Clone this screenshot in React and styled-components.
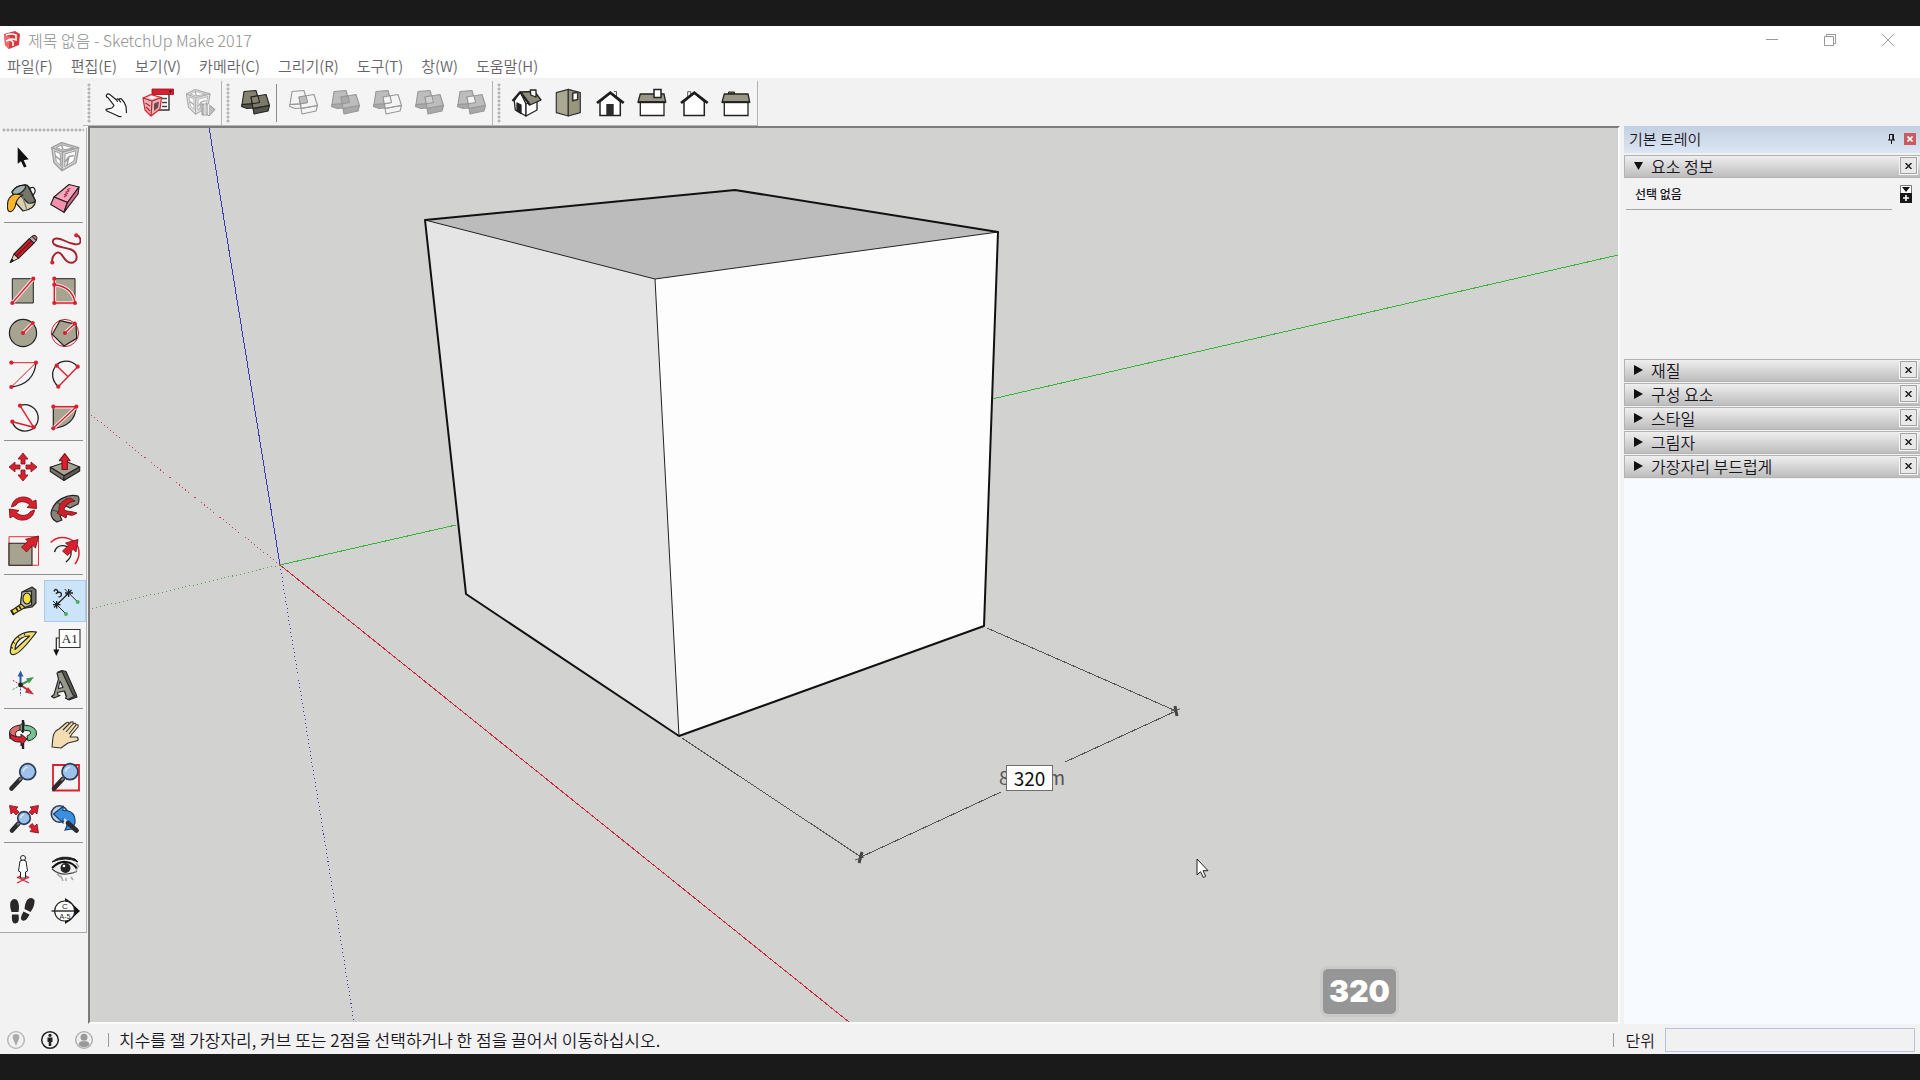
import React, { useState } from "react";
import styled, { createGlobalStyle, css } from "styled-components";

const RED = "#d9202e";
const STONE = "#a6a491";
const INK = "#222222";

const GlobalStyle = createGlobalStyle`
  *, *::before, *::after { box-sizing: border-box; }
  body {
    margin: 0;
    background: #1a1a1a;
    color: #1a161e;
    font-family: "Noto Sans CJK KR", "Liberation Sans", sans-serif;
    font-size: 16px;
    font-weight: 350;
  }
  button {
    margin: 0;
    padding: 0;
    border: 0;
    background: none;
    color: inherit;
    font: inherit;
  }
`;

/* ---------- icons, all on a 32 x 32 grid ---------- */

const Dot = ({ at }) => <circle cx={at[0]} cy={at[1]} r="2.1" fill={RED} />;

// red construction line with a light casing so it reads on the stone fill
const Guide = ({ d }) => (
  <>
    <path d={d} stroke="#f6e4e4" strokeWidth="3.6" fill="none" />
    <path d={d} stroke={RED} strokeWidth="1.4" fill="none" />
  </>
);

const Crate = ({ line, fill }) => (
  <g stroke={line} fill={fill} strokeLinejoin="round">
    <path d="M2.7 6.7 12.7 1.7 29.7 6.7 27 21.7 13 29.7 5 21.7Z" strokeWidth="1.3" />
    <path d="M2.7 6.7 13.5 11 29.7 6.7M13.5 11 13 29.7" strokeWidth="1.3" />
    <path d="M5.6 10 11.3 12.5 11.3 24.5 7.3 20.5Z M16 13 27 9.7 24.8 20.3 15.8 25.5Z" fill="#fff" />
    <path d="M7 6.7 13 3.8 25 7 13.6 9Z" fill="#fff" />
    <path d="M6.5 15 11.3 19M16 21 20 15.5 24.8 14.5M18 24 20 15.5M12.5 4 14 8.5" strokeWidth="1.5" fill="none" />
  </g>
);

const Solids = ({ back = "#bdbdbd", front = "#bdbdbd", lap = "#bdbdbd", line = "#979797", side = "#a9a9a9" }) => (
  <g stroke={line} strokeWidth="1.1" strokeLinejoin="round">
    <path d="M5 4.5 17 3.5 20.5 15.5 13.5 17 3 17.5Z" fill={back} />
    <path d="M3 17.5 13.5 16.7 14 21 8 21.5 2.5 19.5Z" fill={back === "none" ? "none" : side} />
    <path d="M12 10 27 7.5 30.5 18.5 14 21.5Z" fill={front} />
    <path d="M14 21.5 30.5 18.5 29 24 15 27Z" fill={front === "none" ? "none" : side} />
    <path d="M12 10 19 8.8 20.5 15.5 13.3 16.8Z" fill={lap} />
  </g>
);

const Lens = ({ x, y, r, hx, hy }) => (
  <>
    <path d={`M${x - r * 0.9} ${y + r * 0.9} ${hx} ${hy}`} stroke="#2b2b30" strokeWidth="4.6" strokeLinecap="round" />
    <path d={`M${x - r * 0.7} ${y + r * 0.7} ${x - r * 1.1} ${y + r * 1.1}`} stroke="#777" strokeWidth="2" />
    <circle cx={x} cy={y} r={r} fill="#9dc1ea" stroke="#2e3b55" strokeWidth="1.7" />
    <path d={`M${x - r * 0.55} ${y} A${r * 0.6} ${r * 0.6} 0 0 1 ${x} ${y - r * 0.55}`} stroke="#d7e8fb" strokeWidth="1.5" fill="none" />
  </>
);

const ICONS = {
  interact: (
    <path
      d="M12 21 6 22.3C6 24 8.5 25 10.5 25.5L17 28.5Q19 30 21.5 29.5M26.5 26 26 19.5Q24.5 15 21.5 12Q20 10.8 19 13Q17.5 10.8 16.5 13L9.5 7.2Q7.5 6 6.3 8.5Q6 10 8 10.7L14 18.3 12 21M16.5 13 17.8 15M19 13 20.8 15.4"
      fill="#fff" stroke={INK} strokeWidth="1.2" strokeLinejoin="round"
    />
  ),
  attributes: (
    <>
      <path d="M12 4H27V23H14" fill="#fff" stroke="#333" strokeWidth="1.4" />
      <path d="M10 2H31.5V7.5H10Z" fill={RED} stroke="#8c121c" strokeWidth=".8" />
      <path d="M26.5 3.8 30 3.8 28.3 6Z" fill="#4c0b10" />
      <path d="M20 11.5H25M20 15.5H25M20 19.5H25" stroke="#444" strokeWidth="1.3" />
      <path d="M1 11 9 7.5 19.5 10.5 18 22 9 29 3 23Z" fill="#efb3b7" stroke={RED} strokeWidth="1.2" strokeLinejoin="round" />
      <path d="M1 11 10 14 19.5 10.5M10 14 9 29M3.5 16 8 19M4 20 8 24" stroke="#a92b35" strokeWidth="1.2" />
      <path d="M6 10.5 10 8.7 15 10.5 10 12Z" fill="#fff" />
      <path d="M12 16.5 17 14.5 16 20.5 12 24Z" fill="#6d4a4b" />
    </>
  ),
  dynamic: (
    <>
      <g transform="translate(0 1) scale(.88)"><Crate line="#adadad" fill="#e6e6e6" /></g>
      <path d="M18 17H24L31 22.5 25 29 24 28H18Z" fill="#bdbdbd" stroke="#999" />
      <path d="M21 17V28M24.5 17V28" stroke="#eee" />
    </>
  ),
  shell: <Solids back="#85836f" front="#7b796a" lap="#85836f" line="#222" side="#55544a" />,
  intersect: <Solids back="none" front="none" lap="#bcbcbc" />,
  union: <Solids lap="#aaa" />,
  subtract: <Solids front="none" lap="#f4f4f4" />,
  trim: <Solids lap="#d0d0d0" />,
  split: <Solids lap="#f4f4f4" />,
  houseIso: (
    <g stroke={INK} strokeWidth="1.3" strokeLinejoin="round">
      <path d="M4.3 13.7 10.3 5 16 17V29L5.3 23Z" fill="#fff" />
      <path d="M16 17 27 13V23L16 29Z" fill="#fff" />
      <path d="M7 16 11 18V26.5L7 24Z" fill={INK} />
      <path d="M10.3 5 24.5 4.5 31 13 20 18Z" fill="#8e8c79" />
      <path d="M10.3 5 2.5 14M10.3 5 20 18" strokeWidth="2.2" />
      <path d="M20.3 3H26V10L20.8 8Z" fill="#fff" />
    </g>
  ),
  houseTop: (
    <g stroke="#333" strokeWidth="1.2" strokeLinejoin="round">
      <path d="M4.3 5.7 16.3 2.3V29L4.3 25.7Z" fill="#aaa893" />
      <path d="M16.3 2.3 28.3 5.7V25.7L16.3 29Z" fill="#98967f" />
      <path d="M20.7 6.3 25.7 5.3V12.5L20.7 13.7Z" fill="#fff" strokeWidth="1.6" />
    </g>
  ),
  houseFront: (
    <>
      <path d="M20 4.5H22.5V9" stroke="#555" fill="none" />
      <path d="M6 14.7 16.3 6 26.3 14.7V28.5H6Z" fill="#fff" stroke={INK} strokeWidth="1.5" />
      <path d="M3 16 16.3 5.7 29.7 16" stroke="#1d1d1d" strokeWidth="2.8" fill="none" />
      <path d="M12.3 17H19.7V28.5H12.3Z" fill="#2b2b2b" />
    </>
  ),
  houseRight: (
    <g stroke={INK} strokeWidth="1.3">
      <path d="M4.3 15H28V28.5H4.3Z" fill="#fff" />
      <path d="M4.3 7H28L29.7 15H2Z" fill="#999783" />
      <path d="M2 15.2H29.7" strokeWidth="2" />
      <path d="M18 2.5H25V10.5H18Z" fill="#fff" strokeWidth="1.5" />
    </g>
  ),
  houseBack: (
    <>
      <path d="M9.7 10V4.7H12.7V8" stroke="#555" fill="#fff" />
      <path d="M6 14.7 16.3 6 26.3 14.7V28.5H6Z" fill="#fff" stroke={INK} strokeWidth="1.5" />
      <path d="M3 16 16.3 5.7 29.7 16" stroke="#1d1d1d" strokeWidth="2.8" fill="none" />
    </>
  ),
  houseLeft: (
    <g stroke={INK} strokeWidth="1.3">
      <path d="M8.5 5H14.5V7H8.5Z" fill="#777" strokeWidth="1" />
      <path d="M4.3 15H28V28.5H4.3Z" fill="#fff" />
      <path d="M4.3 7H28L29.7 15H2Z" fill="#999783" />
      <path d="M2 15.2H29.7" strokeWidth="2" />
    </g>
  ),

  select: <path d="M10.7 6.3V22.7L14 20.3 17 26.6 19.6 25.4 16.7 19.2 21.7 18.3Z" fill="#111" />,
  component: <Crate line="#9c9c9c" fill="#d4d4d4" />,
  paint: (
    <g stroke={INK} strokeWidth="1.2" strokeLinejoin="round">
      <path d="M5 9Q9 2 18 2L22 4 28.5 18Q28 26 16 28L9 20Z" fill="#d8d0ae" />
      <path d="M17 2Q21 1 22 5L28.5 18Q26 21 21 20L11 10Z" fill="#77766a" />
      <path d="M5 9Q9 2 18 2.2Q20 4 16 8T7 12Z" fill="#9eb3b3" />
      <path d="M22 6C27 1 31 8 25 13" fill="none" />
      <path d="M15 12 20 27" fill="none" stroke="#777" />
      <path d="M8 11C2 13 0 19 .5 25Q1 30 5 28Q8 26 9 20Q11 14 16 12Z" fill="#fbb72c" />
    </g>
  ),
  eraser: (
    <g stroke={INK} strokeWidth="1.2" strokeLinejoin="round">
      <path d="M20 1.5 30 4 18.5 19.5 5 14Z" fill="#f9a6bd" />
      <path d="M5 14 18.5 19.5 15 29.3 1.7 21.5Z" fill="#f68fad" />
      <path d="M30 4 29 11 15 29.3 18.5 19.5Z" fill="#d96b8b" />
      <path d="M15 14 17.5 12.5 15.5 11.5 18.5 10.5 17 9 20 8 18.5 6.5 21.5 5.5" fill="none" stroke="#9f2f55" strokeWidth="1.2" />
    </g>
  ),
  pencil: (
    <g stroke={INK} strokeLinejoin="round">
      <path d="M3.3 29.5 7 21 11.5 25.3Z" fill="#efd9ad" strokeWidth="1" />
      <path d="M7 21 22.5 5.5 27 10 11.5 25.3Z" fill="#c81f2a" strokeWidth="1.1" />
      <path d="M9.5 23 24.5 8" stroke="#75111a" strokeWidth="1.2" />
      <path d="M22.5 5.5 25 3.3 29.3 7.5 27 10Z" fill="#aaa" />
      <path d="M25 3.3Q27 1.4 29 3T29.3 7.5Z" fill="#e36477" />
      <path d="M3 29.8 5 26 6.6 27.6Z" fill="#111" />
    </g>
  ),
  freehand: (
    <>
      <path
        d="M3.3 29.5C2 23 8 17 12 21C15 24 17 31 24 29.5C30 27 28 19 22 16.5C15 14 5 14 4 9.5C3 4 10 5 15 7.5C22 11 32 14 31.5 7.5C31.3 4 29 2.5 27.3 2"
        fill="none" stroke="#a5222d" strokeWidth="1.9"
      />
      <Dot at={[3.3, 29.5]} /><Dot at={[27.3, 2.3]} />
    </>
  ),
  rectangle: (
    <>
      <path d="M5.3 3.7H26.3V28H5.3Z" fill={STONE} stroke={INK} />
      <Guide d="M5.3 28 26.3 3.7" />
      <Dot at={[5.3, 28]} /><Dot at={[26.3, 3.7]} />
    </>
  ),
  rotatedRect: (
    <>
      <path d="M5.3 3.7H26V28H5.3Z" fill={STONE} stroke={INK} />
      <Guide d="M5.3 4V28H26Q24 12 5.3 9.7" />
      <Dot at={[5.3, 3.7]} /><Dot at={[5.3, 9.7]} /><Dot at={[5.3, 28]} /><Dot at={[26, 28]} />
    </>
  ),
  circle: (
    <>
      <circle cx="16" cy="16" r="13.6" fill={STONE} stroke={INK} strokeWidth="1.2" />
      <Guide d="M16 16 25.7 6" />
      <Dot at={[16, 16]} /><Dot at={[25.7, 6]} />
    </>
  ),
  polygon: (
    <>
      <circle cx="16" cy="16" r="13.6" fill="#f4e9ea" stroke={RED} />
      <path d="M11 3.7 27 7.3 27.7 21.3 15 29 3.3 17.3Z" fill={STONE} stroke={INK} strokeWidth="1.2" />
      <Guide d="M16 16 25.7 6.7" />
      <Dot at={[16, 16]} /><Dot at={[25.7, 6.7]} />
    </>
  ),
  arc: (
    <>
      <path d="M29 3.7Q27 25 4.3 28" fill="none" stroke={INK} strokeWidth="1.3" />
      <path d="M4.3 3.7H29L4.3 28" fill="none" stroke={RED} />
      <Dot at={[4.3, 3.7]} /><Dot at={[29, 3.7]} /><Dot at={[4.3, 28]} />
    </>
  ),
  arc2: (
    <>
      <path d="M28.7 7.7C22 0 11 .5 6 8C2 14 3 22 9.3 27.7" fill="none" stroke={INK} strokeWidth="1.3" />
      <path d="M28.7 7.7 9.3 27.7M7.7 6.7 19 17.7" stroke={RED} strokeWidth="1.4" />
      <Dot at={[7.7, 6.7]} /><Dot at={[28.7, 7.7]} /><Dot at={[9.3, 27.7]} />
    </>
  ),
  arc3: (
    <>
      <path d="M13 4.7A13.2 13.2 0 1 1 5.3 20.7" fill="none" stroke={INK} strokeWidth="1.3" />
      <path d="M13 4.7 26.7 26.3 5.3 20.7" fill="none" stroke={RED} strokeWidth="1.4" />
      <Dot at={[13, 4.7]} /><Dot at={[5.3, 20.7]} /><Dot at={[26.7, 26.3]} />
    </>
  ),
  pie: (
    <>
      <path d="M4.3 5.7H27.3Q26 25 4.3 27.3Z" fill={STONE} stroke={INK} strokeWidth="1.2" />
      <Guide d="M4.3 5.7H27.3L4.3 27.3" />
      <Dot at={[4.3, 5.7]} /><Dot at={[27.3, 5.7]} /><Dot at={[4.3, 27.3]} />
    </>
  ),
  move: (
    <g fill={RED} stroke="#7c1119" strokeWidth=".8" strokeLinejoin="round">
      {[0, 90, 180, 270].map((r) => (
        <path key={r} transform={`rotate(${r} 16 16)`} d="M16 2 21 8H18V13H14V8H11Z" />
      ))}
    </g>
  ),
  pushPull: (
    <g stroke={INK} strokeWidth="1.1" strokeLinejoin="round">
      <path d="M1.3 16.3 17.7 10.7 30.7 16 15 24.7Z" fill="#a5a394" />
      <path d="M1.3 16.3 15 24.7V29.5L1.3 20.5Z" fill="#77766a" />
      <path d="M15 24.7 30.7 16V20L15 29.5Z" fill="#5c5b51" />
      <path d="M15.7 2.7 21 9.7H18.3V18.5H13V9.7H10.3Z" fill={RED} stroke="#7c1119" />
    </g>
  ),
  rotate: (
    <g fill={RED} stroke="#7c1119" strokeWidth=".9" strokeLinejoin="round">
      <path d="M4.5 14C6 3 20 1 26 8.5L29 7 29.5 15.5 20 14.5 22.8 12C18 7 11 8 8.5 12.5Z" />
      <path d="M27.5 17C26 28 12 30 6 23L3 25 2.3 16 12 17.5 9.3 19.7C14 24 21 23 23.5 18.5Z" />
    </g>
  ),
  followMe: (
    <g stroke={INK} strokeWidth="1.2" strokeLinejoin="round">
      <path d="M29 3C18 0 4 8 2 20Q2 26 8 29L13 27C9 22 12 16 17 13L21 15 29 11Q31 6 29 3Z" fill="#85837a" />
      <path d="M17 4 19 12M8 9 14 14M3 17 11 19" fill="none" stroke="#444" />
      <path d="M21 5C13 7 9 12 10 18L8 20 17 25 18 21Q23 24 28 20L24 19Q17 18 15 17C16 12 20 9 26 8Z" fill="#c9222d" stroke="#7c1119" strokeWidth=".9" />
    </g>
  ),
  scale: (
    <>
      <path d="M2 1.7H31.5V30.3H2Z" fill="#fbf1f1" stroke={RED} strokeWidth=".9" />
      <path d="M2 8.3H25V30.3H2Z" fill={STONE} stroke={INK} strokeWidth="1.1" />
      <path d="M31.7 1 28.5 13 25.5 10.3 19.5 17 14.5 12 21 6.3 18.5 4.3Z" fill={RED} stroke="#6d1017" strokeWidth=".8" />
    </>
  ),
  offset: (
    <>
      <path d="M1.7 7.5C10-1 24 2 29 12Q32 21 26 29" fill="none" stroke={RED} strokeWidth="1.5" />
      <path d="M5.5 17C8 8 20 9 22 17Q23 22 17 27" fill="none" stroke={INK} strokeWidth="1.4" />
      <path d="M29 4.5 27 17 24 14.3 18.5 20.5 13.5 16 19.3 10.5 16.5 8Z" fill={RED} stroke="#6d1017" strokeWidth=".8" />
    </>
  ),
  tape: (
    <g stroke={INK} strokeWidth="1.1" strokeLinejoin="round">
      <path d="M15 7 25 2 29 5V18L25 22 13 24Z" fill="#71726c" />
      <path d="M15 7 24.5 6V20L13 24Z" fill="#bdbcb2" />
      <ellipse cx="20" cy="13.5" rx="4" ry="5.5" fill="#f7e23c" />
      <path d="M14 19 18 22.5 6 29.5 4 26Z" fill="#f2dc35" />
      <path d="M4 25 7 30M9 23 11 26M12 21 14 24" fill="none" strokeWidth="1.6" />
    </g>
  ),
  dimension: (
    <g stroke={INK} strokeWidth="1.2" fill="none">
      <path d="M7.7 19.7 19.7 8" />
      <path d="M4 16 17 29M15.7 4 28.7 17" strokeWidth="1" />
      <path d="M7.7 16V23.5M4 19.7H11.5M19.7 4V12M16 8H24M5 22.5 10.5 17M17 10.5 22.5 5" strokeWidth="1.3" />
      <path d="M5 6.5Q6 3.5 8 5Q10 7 6.8 8.7Q11 6 12.3 8.5Q13 12 9.5 12" strokeWidth="1.4" />
      <circle cx="17" cy="29" r="2" fill="#4fae5b" stroke="none" />
      <circle cx="28.7" cy="17" r="2" fill="#4fae5b" stroke="none" />
    </g>
  ),
  protractor: (
    <g stroke={INK} strokeWidth="1.2" strokeLinejoin="round">
      <path d="M29.5 5C17 3 4 10 3.3 24Q3 28 7 27.5Q13 27 29.5 5Z" fill="#efdc6c" />
      <path d="M22.5 9C15 9 8.5 14 8 22.5Z" fill="#f5f4f5" />
      <path d="M6 15 8 16.5M11 9.5 12.5 11.5M17 6.5 18 8.5M3.8 20.5 6 21" fill="none" strokeWidth="1" />
    </g>
  ),
  text: (
    <>
      <path d="M10.3 2.5H31V20.5H10.3Z" fill="#fff" stroke="#333" strokeWidth="1.1" />
      <text x="20.7" y="16" fontFamily="Liberation Serif, serif" fontSize="13" textAnchor="middle" fill={INK}>A1</text>
      <path d="M10 11H7.3V23" fill="none" stroke={INK} strokeWidth="1.2" />
      <path d="M4.3 22.5H10.3L7.3 29Z" fill="#111" />
    </>
  ),
  axes: (
    <>
      <path d="M13.5 16V6" stroke="#2a5ba8" strokeWidth="2" />
      <path d="M10.5 7.5 13.5 1.5 16.5 7.5Z" fill="#2a5ba8" />
      <path d="M13.5 16 22 11.5" stroke="#3f9a50" strokeWidth="2" />
      <path d="M19 9.5 27 8 22 14.5Z" fill="#3f9a50" />
      <path d="M13.5 16 21 21" stroke="#c6303b" strokeWidth="2" />
      <path d="M21 18 27 25.5 18 23.5Z" fill="#c6303b" />
      <path d="M13.5 16V27" stroke="#2a5ba8" strokeDasharray="2 1.5" />
      <path d="M13.5 16 5 21" stroke="#3f9a50" strokeDasharray="2 1.5" />
      <path d="M13.5 16 4.5 10.5" stroke="#c6303b" strokeDasharray="2 1.5" />
      <circle cx="13.5" cy="16" r="2.4" fill={INK} />
    </>
  ),
  text3d: (
    <g stroke={INK} strokeWidth="1.1" strokeLinejoin="round">
      <path d="M9 3 13 1.5 17 2.5 27 25 28 28 20 31 18 29 10 8Z" fill="#5a5952" />
      <path d="M8 4 13 2.5 24 26 26 27 19 30.5 16.5 29 17.5 27.5 15.5 22 8.5 23.5 9 26 11 26.5 5 29 2.5 27.5 5 25.5 9.5 10Z" fill="#97968b" />
      <path d="M11 12 14 18.5 9.3 19.5Z" fill="#f5f4f5" />
    </g>
  ),
  orbit: (
    <g stroke={INK} strokeWidth="1" strokeLinejoin="round">
      <path d="M17 6Q30 7 29.5 15Q29 20 21 22L20 17Q25 15 23 12L16 11V14L11 8 17 3Z" fill="#74c496" />
      <path d="M13 6Q2 8 2.5 14L3 20 9 17Q7 12 13 11Z" fill="#e0676c" />
      <path d="M2.5 14Q3 24 14 23V27L20 20 14 15V18Q6 18 2.5 14Z" fill={RED} />
      <path d="M16 1V13M16 24V30" strokeWidth="2.4" />
    </g>
  ),
  pan: (
    <path
      d="M3 28 4 18Q5 12 10 10L17 4Q20 2 20 5L22 3Q25 2 24 5Q27 3 27 6Q30 5 29 8L23 15 21 18 28 18Q31 21 27 22L19 24 12 29ZM20 5 14 11M24 5 17 13M27 6 20 15"
      fill="#f4ddb2" stroke="#333" strokeWidth="1.1" strokeLinejoin="round"
    />
  ),
  zoom: <Lens x={20.7} y={10.7} r={8} hx={4.5} hy={27.5} />,
  zoomWindow: (
    <>
      <path d="M4 4H30V29.5H4Z" fill="none" stroke={RED} strokeWidth="1.8" />
      <Lens x={21} y={10.7} r={8} hx={5} hy={27.5} />
    </>
  ),
  zoomExtents: (
    <>
      <Lens x={17} y={15} r={6.3} hx={5} hy={27.5} />
      <g fill={RED} stroke="#7c1119" strokeWidth=".8">
        <path d="M2.5 2.5 11 4 9 6.2 12 9 9 12 6.3 9 4 11Z" />
        <path d="M31.5 2.5 23 4 25 6.2 22 9 25 12 27.8 9 30 11Z" />
        <path d="M31.5 30 30 21 27.8 23.2 25 20.5 22 23.5 25 26.2 23 28.5Z" />
      </g>
    </>
  ),
  zoomPrevious: (
    <>
      <circle cx="10.5" cy="11" r="8.2" fill="#c3d3e4" stroke="#2e3b55" strokeWidth="1.6" />
      <path d="M4.5 11 14 3.5V7.5Q27 7 26 20L23 26 16 27Q21 18 14 16V20Z" fill="#3a8fe0" stroke="#173d6b" strokeWidth="1.1" />
      <path d="M15 16 19 20" stroke="#ddd" strokeWidth="2.4" />
      <path d="M19 20 27.5 27.5" stroke="#2b2b30" strokeWidth="4.8" strokeLinecap="round" />
    </>
  ),
  positionCamera: (
    <>
      <path d="M10 24 22 30M22 24 10 30M10 25Q16 20 22 25" stroke={RED} strokeWidth="1.3" fill="none" />
      <circle cx="16" cy="5" r="2.5" fill="#fff" stroke={INK} />
      <path d="M13 8Q16 6 19 8L20.5 18 18.5 19V25H13.5V19L11.5 18Z" fill="#fff" stroke={INK} />
    </>
  ),
  lookAround: (
    <>
      <path d="M3 14Q12 5 27 13Q26 20 16 22Q8 21 3 14Z" fill="#ececec" />
      <path d="M3 9Q12 1 26 6L29 9Q17 3 3 9Z" fill={INK} stroke={INK} />
      <path d="M3 15Q10 8 17 9Q25 10 28 16" fill="none" stroke="#111" strokeWidth="2" />
      <circle cx="16.5" cy="15" r="5" fill="#242424" />
      <circle cx="15" cy="13" r="1.3" fill="#fff" />
      <path d="M3 16Q10 22 18 21T28 18" fill="none" stroke="#444" strokeWidth="1.2" />
      <path d="M8 21 12 24M12 23 14 28M17 25V28M22 24 24 27M26 20 29 14M27 10 30 14" stroke="#aaa" strokeWidth="1.6" />
    </>
  ),
  walk: (
    <g fill="#2a2728">
      <path d="M3.5 7Q6 2 10 5Q13 9 11.5 17L4.5 17Q2.5 11 3.5 7Z" />
      <path d="M5 19.5H11.5Q13 28 8.5 28.5T5 19.5Z" />
      <path d="M20 5Q24 1 27.5 5Q28 11 23.5 17L17.5 14Q17.5 9 20 5Z" />
      <path d="M16.5 16.5 22.5 19.5Q19 27 15.5 25.5T16.5 16.5Z" />
    </g>
  ),
  section: (
    <>
      <path d="M16 3 22 7 30 16 22 25 16 29Z" fill="#151515" />
      <circle cx="15.7" cy="16" r="10" fill="#fff" stroke={INK} strokeWidth="1.2" />
      <path d="M2.5 16H30" stroke={INK} strokeWidth="1.4" />
      <path d="M26 11.5 31 16 26 20.5Z" fill="#151515" />
      <text x="16" y="14" fontFamily="Liberation Sans, sans-serif" fontSize="8" textAnchor="middle" fill={INK}>C</text>
      <text x="16" y="23.5" fontFamily="Liberation Sans, sans-serif" fontSize="7" textAnchor="middle" fill={INK}>A-5</text>
    </>
  ),
};

const Icon = ({ name }) => (
  <svg width="32" height="32" viewBox="0 0 32 32" fill="none" aria-hidden="true">
    {ICONS[name]}
  </svg>
);

/* ---------- frame ---------- */

const Screen = styled.div`
  display: flex;
  flex-direction: column;
  min-height: 100vh;
  padding: 26px 0;
  background: #1a1a1a;
`;

const AppWindow = styled.div`
  flex: 1;
  display: flex;
  flex-direction: column;
  background: #f3f2f3;
`;

const TitleBar = styled.header`
  display: flex;
  align-items: center;
  height: 30px;
  padding: 0 0 2px 3px;
  gap: 7px;
  background: #fff;
  color: #8e8e8e;
`;

const Title = styled.h1`
  flex: 1;
  margin: 0;
  font-size: 16px;
  font-weight: 300;
  line-height: 24px;
`;

const WindowButton = styled.button`
  display: flex;
  align-items: center;
  justify-content: center;
  width: 52px;
  height: 28px;
  color: #999;
`;

const WindowButtons = styled.div`
  display: flex;
  gap: 6px;
  padding-right: 6px;
`;

const MenuBar = styled.nav`
  display: flex;
  align-items: center;
  gap: 18px;
  height: 22px;
  padding: 0 7px 2px;
  background: #fff;
  color: #66636a;
  font-size: 15px;
`;

const MenuItem = styled.button`
  line-height: 20px;
`;

/* ---------- toolbars ---------- */

const ToolbarRow = styled.div`
  display: flex;
  height: 48px;
  padding: 3px 0 0 83px;
`;

const ToolGroup = styled.div`
  display: flex;
  align-items: center;
  padding-left: 4px;
  border-right: 1px solid #b4b4b4;
  border-bottom: 1px solid #b4b4b4;
  background: #f5f4f5;
`;

const dots = "radial-gradient(circle, #b5b5b5 1px, transparent 2px)";

const Grip = styled.span`
  flex: none;
  display: block;
  ${(p) =>
    p.$across
      ? css`width: 82px; height: 4px; margin: 0 2px 4px;`
      : css`width: 4px; height: 40px; margin-right: 4px;`}
  background: ${dots} 0 0 / 4px 4px;
`;

const ToolButton = styled.button`
  display: flex;
  align-items: center;
  justify-content: center;
  width: 42px;
  height: 42px;
  border: 1px solid ${(p) => (p.$active ? "#a9cdf0" : "transparent")};
  background: ${(p) => (p.$active ? "#cce4fa" : "transparent")};
`;

const Divider = styled.span`
  width: 1px;
  height: 38px;
  margin-right: 5px;
  background: #8a8a8a;
`;

const Body = styled.main`
  flex: 1;
  display: flex;
`;

const SideRail = styled.aside`
  flex: none;
  width: 88px;
  padding-top: 2px;
`;

const ToolBox = styled.div`
  width: 87px;
  border-right: 1px solid #b4b4b4;
  border-bottom: 1px solid #a8a8a8;
  background: #f5f4f5;
`;

const RailGrid = styled.div`
  display: grid;
  grid-template-columns: 42px 42px;
  margin-left: 2px;
`;

const RailRule = styled.hr`
  height: 1px;
  margin: 2px 3px 5px 4px;
  border: 0;
  background: #909090;
`;

/* ---------- modelling canvas ---------- */

const Canvas = styled.section`
  position: relative;
  flex: 1;
  min-width: 0;
  border: 2px solid;
  border-color: #7c7c7c #fbfbfb #fbfbfb #7c7c7c;
  background: #d2d2d0;
  overflow: hidden;
`;

const Drawing = styled.svg`
  position: absolute;
  inset: 0;
  width: 100%;
  height: 100%;
`;

const LengthInput = styled.input`
  position: absolute;
  left: 916px;
  top: 637px;
  width: 47px;
  height: 26px;
  padding: 0 0 2px;
  border: 1px solid #6d6d6d;
  border-radius: 0;
  background: #fff;
  color: #111;
  font-family: "Noto Sans CJK KR", sans-serif;
  font-size: 19px;
  text-align: center;
`;

const Pointer = styled.svg`
  position: absolute;
  left: 1106px;
  top: 730px;
`;

const KeyBadge = styled.div`
  position: absolute;
  left: 1233px;
  top: 841px;
  width: 73px;
  border-radius: 5px;
  background: #969696;
  box-shadow: 0 0 0 3px #c9c9c8;
  color: #fff;
  font-family: Inter, "DejaVu Sans", sans-serif;
  font-size: 30px;
  font-weight: 900;
  line-height: 45px;
  text-align: center;
`;

/* ---------- tray ---------- */

const Tray = styled.aside`
  flex: none;
  display: flex;
  flex-direction: column;
  width: 300px;
  padding-left: 4px;
`;

const TrayTitle = styled.div`
  display: flex;
  align-items: center;
  height: 27px;
  margin-bottom: 2px;
  padding: 0 4px 2px 5px;
  gap: 8px;
  background: linear-gradient(#c3d0e1, #dce6f4);
  h2 {
    flex: 1;
    margin: 0;
    font-size: 15px;
    font-weight: 350;
    line-height: 24px;
  }
`;

const TrayClose = styled.button`
  display: flex;
  align-items: center;
  justify-content: center;
  width: 12px;
  height: 12px;
  background: #c75c61;
`;

const PanelHead = styled.div`
  display: flex;
  align-items: center;
  height: 23px;
  margin-bottom: 1px;
  padding: 0 3px 2px 9px;
  border: 1px solid #b2b2b2;
  border-right: 0;
  background: linear-gradient(#efefef, #bdbdbd);
`;

const PanelToggle = styled.button`
  flex: 1;
  display: flex;
  align-items: center;
  gap: 8px;
  line-height: 20px;
  text-align: left;
`;

const PanelClose = styled.button`
  display: flex;
  align-items: center;
  justify-content: center;
  width: 17px;
  height: 17px;
  border: 1px solid #a3a3a3;
  outline: 1px solid #f7f7f7;
  background: #e9e9e9;
`;

const EntityInfo = styled.div`
  display: flex;
  align-items: flex-start;
  height: 180px;
  padding: 6px 8px 0 2px;
  gap: 8px;
  p {
    flex: 1;
    margin: 0;
    padding: 0 9px 6px;
    border-bottom: 1px solid #a5a5a5;
    font-size: 12px;
    font-weight: 500;
    line-height: 18px;
  }
`;

const TrayFill = styled.div`
  flex: 1;
  background: #f7faff;
`;

/* ---------- status bar ---------- */

const StatusBar = styled.footer`
  display: flex;
  align-items: center;
  height: 30px;
  padding: 2px 5px 0 6px;
`;

const StatusButton = styled.button`
  display: flex;
  width: 20px;
  height: 20px;
  margin-right: 14px;
`;

const StatusRule = styled.span`
  width: 1px;
  height: 14px;
  background: #999;
`;

const Hint = styled.p`
  flex: 1;
  margin: 0 12px 0 10px;
  font-size: 17px;
  line-height: 24px;
`;

const Measurement = styled.label`
  display: flex;
  align-items: center;
  gap: 10px;
  margin-left: 12px;
  line-height: 24px;
  input {
    width: 250px;
    height: 24px;
    border: 1px solid #bac2dc;
    background: #f2f1f2;
  }
`;

const MENUS = ["파일(F)", "편집(E)", "보기(V)", "카메라(C)", "그리기(R)", "도구(T)", "창(W)", "도움말(H)"];

const TOOLSETS = [
  ["select", "component", "paint", "eraser"],
  ["pencil", "freehand", "rectangle", "rotatedRect", "circle", "polygon", "arc", "arc2", "arc3", "pie"],
  ["move", "pushPull", "rotate", "followMe", "scale", "offset"],
  ["tape", "dimension", "protractor", "text", "axes", "text3d"],
  ["orbit", "pan", "zoom", "zoomWindow", "zoomExtents", "zoomPrevious"],
  ["positionCamera", "lookAround", "walk", "section"],
];

const CLOSED_PANELS = ["재질", "구성 요소", "스타일", "그림자", "가장자리 부드럽게"];

const Tool = ({ name, active, onClick }) => (
  <ToolButton type="button" aria-label={name} $active={active} onClick={onClick}>
    <Icon name={name} />
  </ToolButton>
);

const Panel = ({ title, open }) => (
  <PanelHead>
    <PanelToggle type="button" aria-expanded={!!open}>
      <svg width="9" height="10" viewBox="0 0 9 10" aria-hidden="true">
        <path d={open ? "M0 1H9L4.5 9Z" : "M0 0 9 5 0 10Z"} fill="#111" />
      </svg>
      {title}
    </PanelToggle>
    <PanelClose type="button" aria-label={`${title} 닫기`}>
      <svg width="7" height="6" viewBox="0 0 7 6" aria-hidden="true">
        <path d="M.5 0 6.5 6M6.5 0 .5 6" stroke="#222" strokeWidth="1.5" />
      </svg>
    </PanelClose>
  </PanelHead>
);

function Model() {
  return (
    <Drawing viewBox="90 128 1528 894" preserveAspectRatio="xMinYMin slice" aria-hidden="true">
      <g fill="none" shapeRendering="crispEdges">
        <path d="M209 127 280 565" stroke="#3a36b4" />
        <path d="M280 565 354 1022" stroke="#3a36b4" strokeDasharray="1 3" />
        <path d="M280 565 456 525M992 399 1618 255" stroke="#36b43a" />
        <path d="M280 565 90 609" stroke="#5d9a5f" strokeDasharray="1 3" />
        <path d="M280 565 849 1022" stroke="#c8283f" />
        <path d="M280 565 90 414" stroke="#c8404f" strokeDasharray="1 3" />
      </g>
      <path d="M425 220 735 190 998 232 655 279Z" fill="#bcbcbc" />
      <path d="M425 220 655 279 679 736 466 594Z" fill="#e5e5e5" />
      <path d="M655 279 998 232 984 626 679 736Z" fill="#fdfdfd" />
      <path d="M425 220 655 279 998 232M655 279 679 736" fill="none" stroke="#222" />
      <path d="M425 220 735 190 998 232 984 626 679 736 466 594Z" fill="none" stroke="#111" strokeWidth="2" strokeLinejoin="round" />
      <g fill="none" stroke="#555" shapeRendering="crispEdges">
        <path d="M682 738 861 857 1001 792M1065 762 1176 711 987 628" />
      </g>
      <path d="M862 852 859 863M1175 706 1177 716" stroke="#444" strokeWidth="3" />
      <path d="M855 860 864 857M1171 711 1180 709" stroke="#555" />
      <g fill="#555" fontFamily="Noto Sans CJK KR, sans-serif" fontSize="19" fontWeight="400">
        <text x="999" y="785">8</text>
        <text x="1065" y="785" textAnchor="end">mm</text>
      </g>
    </Drawing>
  );
}

export default function App() {
  const [tool, setTool] = useState("dimension");
  const [length, setLength] = useState("320");
  const [measure, setMeasure] = useState("");

  return (
    <Screen>
      <GlobalStyle />
      <AppWindow>
        <TitleBar>
          <svg width="18" height="20" viewBox="0 0 18 20" aria-hidden="true">
            <path d="M1 4 12 1 17 4 16 15 6 19 2 15Z" fill="#d93a40" />
            <path d="M1 4 7 7 6 19 2 15Z" fill="#ef6a6d" />
            <path d="M3 5Q8 3 13 5V10Q9 8 5 10M3 11Q8 9 10 12V16" fill="none" stroke="#fff" strokeWidth="1.5" />
          </svg>
          <Title>제목 없음 - SketchUp Make 2017</Title>
          <WindowButtons>
            <WindowButton type="button" aria-label="최소화">
              <svg width="12" height="12" viewBox="0 0 12 12"><path d="M0 5.5H12" stroke="currentColor" /></svg>
            </WindowButton>
            <WindowButton type="button" aria-label="이전 크기로 복원">
              <svg width="12" height="12" viewBox="0 0 12 12" fill="none" stroke="currentColor">
                <path d="M.5 2.5H9.5V11.5H.5ZM2.5 2.5V.5H11.5V9.5H9.5" />
              </svg>
            </WindowButton>
            <WindowButton type="button" aria-label="닫기">
              <svg width="12" height="12" viewBox="0 0 12 12"><path d="M0 0 12 12M12 0 0 12" stroke="currentColor" /></svg>
            </WindowButton>
          </WindowButtons>
        </TitleBar>

        <MenuBar>
          {MENUS.map((m) => (
            <MenuItem key={m} type="button">{m}</MenuItem>
          ))}
        </MenuBar>

        <ToolbarRow>
          <ToolGroup>
            <Grip />
            {["interact", "attributes", "dynamic"].map((n) => <Tool key={n} name={n} />)}
          </ToolGroup>
          <ToolGroup>
            <Grip />
            <Tool name="shell" />
            <Divider />
            {["intersect", "union", "subtract", "trim", "split"].map((n) => <Tool key={n} name={n} />)}
          </ToolGroup>
          <ToolGroup>
            <Grip />
            {["houseIso", "houseTop", "houseFront", "houseRight", "houseBack", "houseLeft"].map((n) => (
              <Tool key={n} name={n} />
            ))}
          </ToolGroup>
        </ToolbarRow>

        <Body>
          <SideRail>
            <ToolBox>
              <Grip $across />
              {TOOLSETS.map((set, i) => (
                <React.Fragment key={i}>
                  {i > 0 && <RailRule />}
                  <RailGrid>
                    {set.map((n) => (
                      <Tool key={n} name={n} active={tool === n} onClick={() => setTool(n)} />
                    ))}
                  </RailGrid>
                </React.Fragment>
              ))}
            </ToolBox>
          </SideRail>

          <Canvas>
            <Model />
            <LengthInput aria-label="길이" value={length} onChange={(e) => setLength(e.target.value)} />
            <Pointer width="14" height="21" viewBox="0 0 14 21" aria-hidden="true">
              <path d="M1 1V17L4.5 13.7 7.3 19.5 9.7 18.4 7 12.7H12Z" fill="#fff" stroke="#222" />
            </Pointer>
            <KeyBadge>320</KeyBadge>
          </Canvas>

          <Tray>
            <TrayTitle>
              <h2>기본 트레이</h2>
              <button type="button" aria-label="고정">
                <svg width="9" height="10" viewBox="0 0 9 10" fill="none" stroke="#111" aria-hidden="true" display="block">
                  <path d="M2.5 6V.5H6.5V6M1 6H8M4.5 6V10" />
                  <path d="M6 .5V6" strokeWidth="1.5" />
                </svg>
              </button>
              <TrayClose type="button" aria-label="트레이 닫기">
                <svg width="6" height="6" viewBox="0 0 6 6" aria-hidden="true">
                  <path d="M.5 .5 5.5 5.5M5.5 .5 .5 5.5" stroke="#fff" strokeWidth="1.6" />
                </svg>
              </TrayClose>
            </TrayTitle>
            <Panel title="요소 정보" open />
            <EntityInfo>
              <p>선택 없음</p>
              <button type="button" aria-label="세부 정보">
                <svg width="12" height="18" viewBox="0 0 12 18" aria-hidden="true" display="block">
                  <path d="M.5 .5H11.5V17.5H.5Z" fill="#fff" stroke="#777" />
                  <path d="M2 2H10L6 7Z" fill="#111" />
                  <path d="M0 8H12V18H0Z" fill="#1a1a1a" />
                  <path d="M6 10V16M3 13H9" stroke="#fff" strokeWidth="1.6" />
                </svg>
              </button>
            </EntityInfo>
            {CLOSED_PANELS.map((p) => <Panel key={p} title={p} />)}
            <TrayFill />
          </Tray>
        </Body>

        <StatusBar>
          <StatusButton type="button" aria-label="위치">
            <svg width="20" height="20" viewBox="0 0 20 20">
              <circle cx="10" cy="10" r="8.3" fill="none" stroke="#b0b0b0" strokeWidth="1.3" />
              <path d="M10 4Q14 4 13.3 8L10 16 6.7 8Q6 4 10 4Z" fill="#aaa" />
            </svg>
          </StatusButton>
          <StatusButton type="button" aria-label="크레딧">
            <svg width="20" height="20" viewBox="0 0 20 20">
              <circle cx="10" cy="10" r="8.3" fill="none" stroke="#222" strokeWidth="1.5" />
              <circle cx="10" cy="5.3" r="1.6" fill="#222" />
              <path d="M7.5 7.5H12.5V12H11.3V16H8.7V12H7.5Z" fill="#222" />
            </svg>
          </StatusButton>
          <StatusButton type="button" aria-label="로그인">
            <svg width="20" height="20" viewBox="0 0 20 20">
              <circle cx="10" cy="10" r="8.3" fill="#eee" stroke="#aaa" strokeWidth="1.3" />
              <circle cx="10" cy="7.3" r="3.5" fill="#999" />
              <path d="M4.5 15Q5 11.3 8 11.3H12Q15 11.3 15.5 15Q10 19.5 4.5 15Z" fill="#999" />
            </svg>
          </StatusButton>
          <StatusRule />
          <Hint>치수를 잴 가장자리, 커브 또는 2점을 선택하거나 한 점을 끌어서 이동하십시오.</Hint>
          <StatusRule />
          <Measurement>
            단위
            <input type="text" value={measure} onChange={(e) => setMeasure(e.target.value)} />
          </Measurement>
        </StatusBar>
      </AppWindow>
    </Screen>
  );
}
